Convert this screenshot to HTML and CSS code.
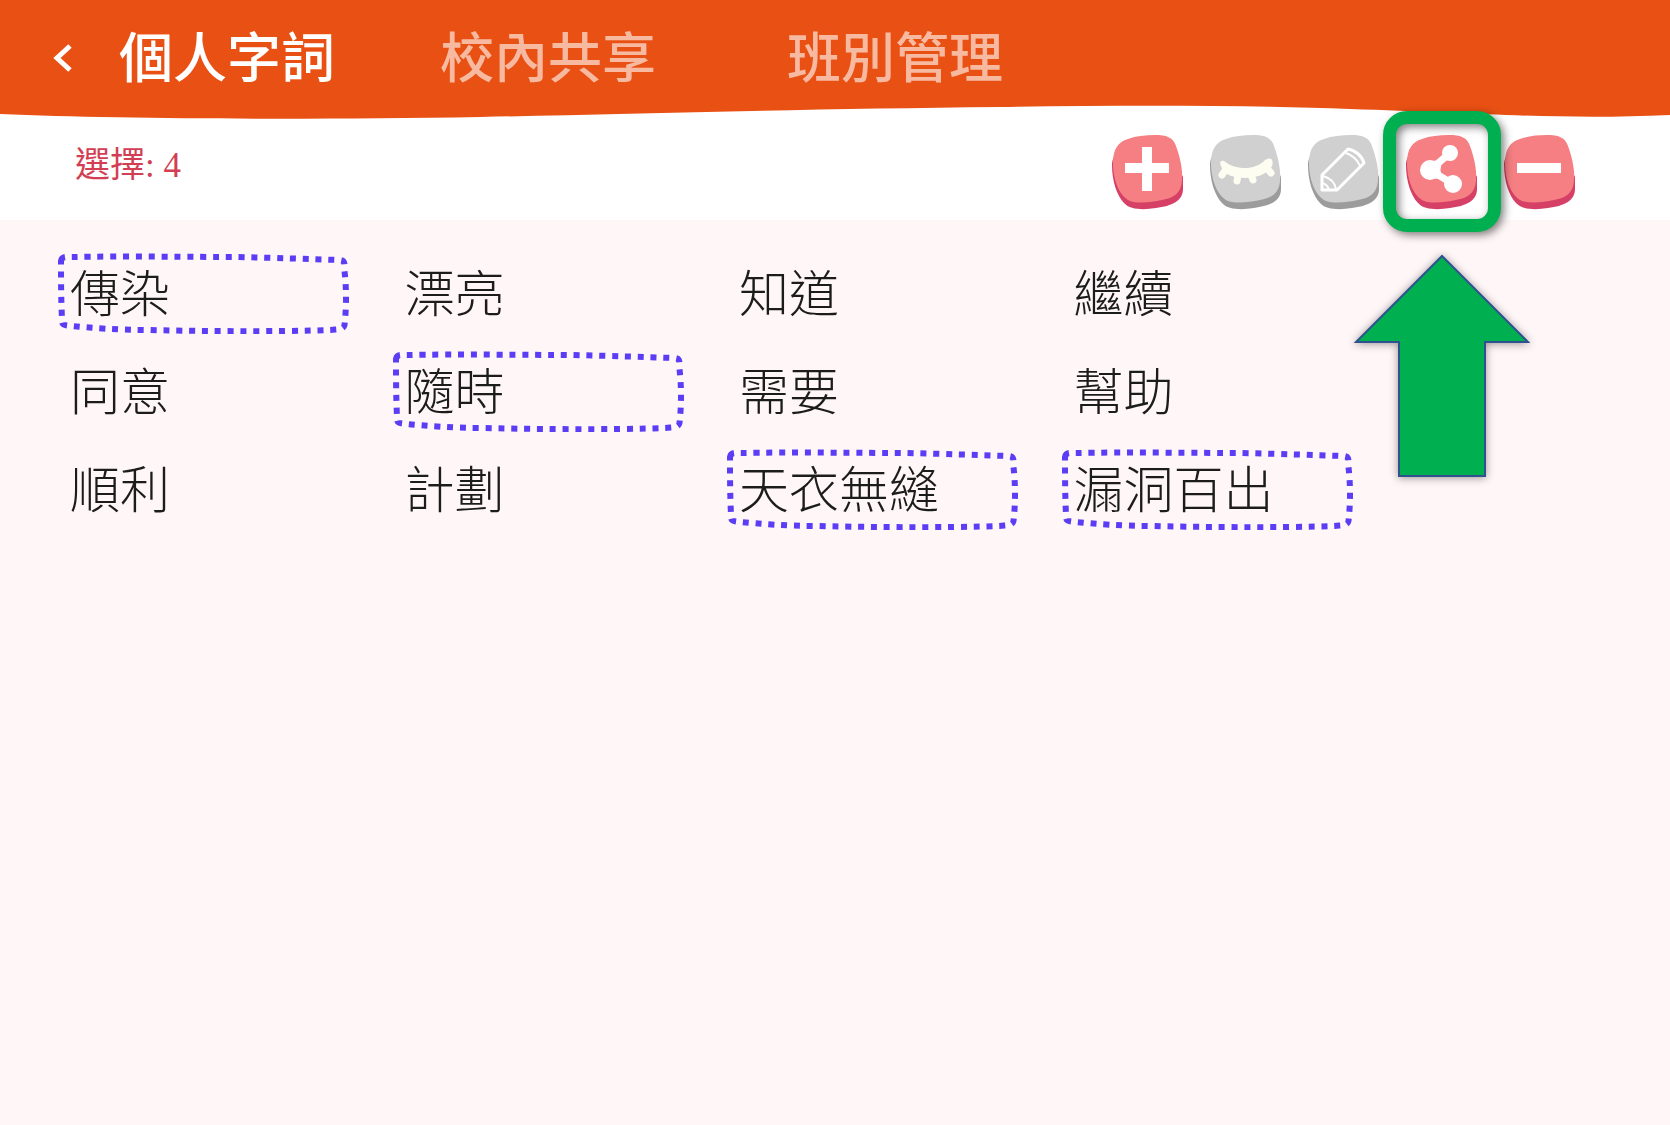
FILE: index.html
```html
<!DOCTYPE html>
<html lang="zh-Hant">
<head>
  <meta charset="UTF-8">
  <meta name="viewport" content="width=device-width, initial-scale=1">
  <title>個人字詞</title>
  <link rel="stylesheet" href="styles.css">
</head>
<body>

  <!-- Shared shapes -->
  <svg class="defs" aria-hidden="true">
    <symbol id="tile" viewBox="0 0 71 75">
      <path class="tile-side" d="M0 30C0 46 5 61 12 68C18 75 32 75 44 73C60 71 71 66 71 54V42L60 20L8 16C3 18 0 24 0 30Z"/>
      <path class="tile-face" d="M1 28C1 14 6 7 16 4C24 1 33 0 43 0C54 0 61 2 64 11C68 22 71 34 70 46C69 58 62 63 50 65C40 67 27 69 18 66C7 61 1 44 1 28Z"/>
    </symbol>
    <symbol id="dots" viewBox="0 0 291 81" preserveAspectRatio="none">
      <path d="M3 8C4 3 8 4 14 4C60 3 140 4 180 4C220 5 250 6 280 7C287 7 286 10 286 18C288 35 288 55 286 72C285 77 280 76 272 77C220 79 120 78 92 77C60 77 35 75 14 73C4 72 4 72 4 66C3 45 3 25 3 8Z" fill="none" stroke="#5b3df5" stroke-width="6" stroke-dasharray="6 6.8"/>
    </symbol>
  </svg>

  <header>
    <div class="bar">
      <button class="back" aria-label="返回">
        <svg width="24" height="30" viewBox="0 0 24 30"><path d="M20 3L7 15L20 27" fill="none" stroke="#fff" stroke-width="5"/></svg>
      </button>
      <nav class="tabs">
        <a href="#" class="active">個人字詞</a>
        <a href="#">校內共享</a>
        <a href="#">班別管理</a>
      </nav>
    </div>
    <svg class="wave" viewBox="0 0 1670 14" preserveAspectRatio="none">
      <path d="M0 0H1670V10C1560 15 1480 8 1350 4C1250 0 1120 0 1000 2C800 4 620 9 480 12C300 15 120 14 0 9Z" fill="#e95013"/>
    </svg>
  </header>

  <section class="toolbar">
    <p class="count">選擇: 4</p>
    <div class="tools">
      <button class="tool" aria-label="新增">
        <svg viewBox="0 0 71 75">
          <use href="#tile"/>
          <path d="M30 12H40V28H57V38H40V56H30V38H13V28H30Z" fill="#fff"/>
        </svg>
      </button>
      <button class="tool off" aria-label="隱藏">
        <svg viewBox="0 0 71 75">
          <use href="#tile"/>
          <path d="M14 26C25 35 45 36 55 25C61 21 64 25 62 31C57 40 45 43 35 43C24 43 14 40 11 31C9 27 11 25 14 26Z" fill="#fdfdf2"/>
          <path d="M16 34L12 40M28 40L27 46M41 40L43 45M56 32L61 38" fill="none" stroke="#fdfdf2" stroke-width="7" stroke-linecap="round"/>
        </svg>
      </button>
      <button class="tool off" aria-label="編輯">
        <svg viewBox="0 0 71 75">
          <use href="#tile"/>
          <g fill="none" stroke="#fff" stroke-width="3" stroke-linejoin="round">
            <path d="M14 55V40L40 14C47 15 54 21 56 28L29 55Z"/>
            <path d="M38 18C44 20 50 25 52 31M15 41C22 43 27 48 28 54" stroke-width="2"/>
            <path d="M14 48C18 49 20 51 21 55" stroke-width="2"/>
          </g>
        </svg>
      </button>
      <div class="highlight">
        <button class="tool" aria-label="分享">
          <svg viewBox="0 0 71 75">
            <use href="#tile"/>
            <path d="M44 18L24 35L47 49" fill="none" stroke="#fff" stroke-width="7"/>
            <path d="M26 26L38 25Q31 35 38 43L26 44Z" fill="#fff"/>
            <circle cx="24" cy="35" r="10" fill="#fff"/>
            <circle cx="44" cy="18" r="8" fill="#fff"/>
            <circle cx="47" cy="49" r="9" fill="#fff"/>
          </svg>
        </button>
        <span class="ring"></span>
        <svg class="arrow" viewBox="0 0 178 224" aria-hidden="true">
          <path d="M89 3L175 89H132V223H46V89H3Z" fill="#00b050" stroke="#2f528f" stroke-width="2"/>
        </svg>
      </div>
      <button class="tool" aria-label="刪除">
        <svg viewBox="0 0 71 75">
          <use href="#tile"/>
          <path d="M13 28H57V38H13Z" fill="#fff"/>
        </svg>
      </button>
    </div>
  </section>

  <main class="words">
    <button class="word" aria-pressed="true"><svg class="frame"><use href="#dots"/></svg>傳染</button>
    <button class="word">漂亮</button>
    <button class="word">知道</button>
    <button class="word">繼續</button>
    <button class="word">同意</button>
    <button class="word" aria-pressed="true"><svg class="frame"><use href="#dots"/></svg>隨時</button>
    <button class="word">需要</button>
    <button class="word">幫助</button>
    <button class="word">順利</button>
    <button class="word">計劃</button>
    <button class="word" aria-pressed="true"><svg class="frame"><use href="#dots"/></svg>天衣無縫</button>
    <button class="word" aria-pressed="true"><svg class="frame"><use href="#dots"/></svg>漏洞百出</button>
  </main>

</body>
</html>
```
FILE: styles.css
```css
* { margin:0; padding:0; box-sizing:border-box; }
body {
  min-height:100vh;
  background:#fff6f7;
  color:#1c1c1c;
  font-family:"Liberation Serif","Noto Sans CJK TC",serif;
}
button { background:none; border:none; font:inherit; color:inherit; cursor:pointer; }
svg { display:block; }
.defs { position:absolute; width:0; height:0; }

/* Header */
header { background:#fff; }
.bar {
  display:flex;
  align-items:center;
  height:105px;
  padding:4px 50px 0;
  background:#e95013;
}
.back { width:69px; padding-top:6px; }
.tabs {
  display:grid;
  grid-template-columns:321px 347px auto;
  font-family:"Noto Sans CJK TC",sans-serif;
  font-size:54px;
  font-weight:500;
  line-height:64px;
}
.tabs a { color:#f8b9a1; text-decoration:none; white-space:nowrap; }
.tabs .active { color:#fff; }
.wave { width:100%; height:14px; }

/* Toolbar */
.toolbar {
  display:flex;
  justify-content:space-between;
  align-items:center;
  height:101px;
  padding:6px 95px 0 75px;
  background:#fff;
}
.count { padding-bottom:14px; font-size:35px; line-height:48px; color:#d23f55; }
.tools { display:flex; gap:27px; }
.tool { display:block; width:71px; height:75px; }
.tool svg { width:100%; height:100%; }
.tile-face { fill:var(--face, #f57f82); }
.tile-side { fill:var(--side, #d64067); }
.off { --face:#d0d0d0; --side:#9c9c9c; }

/* Callout over the share button */
.highlight { position:relative; z-index:1; }
.ring {
  position:absolute;
  top:-24px; left:-23px;
  width:118px; height:121px;
  border:13px solid #00b050;
  border-radius:24px;
  filter:drop-shadow(3px 3px 4px rgba(0,0,0,.5));
  pointer-events:none;
}
.arrow {
  position:absolute;
  top:118px; left:-53px;
  width:178px; height:224px;
  filter:drop-shadow(0 1px 4px rgba(0,0,0,.4));
  pointer-events:none;
}

/* Word list */
.words {
  display:grid;
  grid-template-columns:repeat(4, 1fr);
  gap:17px 43px;
  padding:33px 317px 33px 58px;
}
.word {
  position:relative;
  height:81px;
  padding:0 0 6px 12px;
  font-family:"Noto Sans CJK TC",sans-serif;
  font-size:50px;
  font-weight:300;
  line-height:75px;
  text-align:left;
  white-space:nowrap;
}
.frame { position:absolute; top:0; left:0; width:100%; height:100%; }
```
